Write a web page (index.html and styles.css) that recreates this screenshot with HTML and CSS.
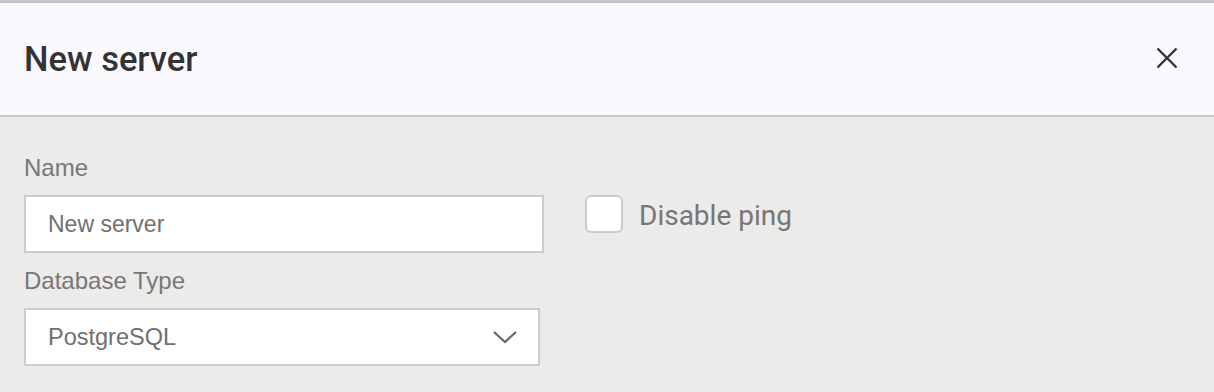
FILE: index.html
```html
<!DOCTYPE html>
<html lang="en">
<head>
<meta charset="UTF-8">
<meta name="viewport" content="width=device-width, initial-scale=1.0">
<title>New server</title>
<link rel="stylesheet" href="styles.css">
</head>
<body>

<div class="modal">
    <div class="modal-header">
        <h2 class="modal-title">New server</h2>
        <button class="close" aria-label="Close">
            <svg width="22" height="22" viewBox="0 0 22 22">
                <path d="M1.5 1.5 L20.5 20.5 M20.5 1.5 L1.5 20.5" stroke="#333" stroke-width="2.4" stroke-linecap="butt" fill="none"/>
            </svg>
        </button>
    </div>

    <div class="modal-body">
        <div class="fields">
            <label class="field-label" for="name">Name</label>
            <input class="field-input" id="name" type="text" value="New server">

            <label class="field-label second" for="dbtype">Database Type</label>
            <div class="select">
                <span>PostgreSQL</span>
                <svg width="26" height="16" viewBox="0 0 26 16">
                    <path d="M2 3 L13 13 L24 3" stroke="#666" stroke-width="2.2" fill="none"/>
                </svg>
            </div>
        </div>

        <label class="checkbox">
            <span class="box"></span>
            <span class="checkbox-text">Disable ping</span>
        </label>
    </div>
</div>

</body>
</html>
```

FILE: styles.css
```css
body, html {
    margin: 0;
    padding: 0;
    height: 100%;
    width: 100%;
}

body {
    background-color: #ecebe9;
    font-family: "Liberation Sans", Arial, sans-serif;
}

.modal {
    border-top: 3px solid #c4c4c4;
}

.modal-header {
    height: 114px;
    box-sizing: border-box;
    padding: 0 36px 0 24px;
    display: flex;
    align-items: center;
    justify-content: space-between;
    background-color: #fafafe;
    border-bottom: 2px solid #c9c9c9;
}

.modal-title {
    margin: 0;
    font-family: Roboto, sans-serif;
    font-weight: 500;
    font-size: 34.5px;
    color: #333;
}

.close {
    background: none;
    border: none;
    padding: 0 0 2px 0;
    cursor: pointer;
    display: flex;
}

.modal-body {
    display: flex;
    align-items: flex-start;
    padding: 37px 24px;
}

.fields {
    display: flex;
    flex-direction: column;
    width: 520px;
}

.field-label {
    font-size: 24px;
    line-height: 28px;
    color: #777;
    margin-bottom: 13px;
}

.field-label.second {
    margin-top: 14px;
    margin-bottom: 13px;
}

.field-input {
    width: 520px;
    height: 58px;
    box-sizing: border-box;
    border: 2px solid #cdcdcd;
    background-color: #fff;
    padding: 0 22px;
    font-family: "Liberation Sans", Arial, sans-serif;
    font-size: 23px;
    color: #707070;
    outline: none;
}

.select {
    width: 516px;
    height: 58px;
    box-sizing: border-box;
    border: 2px solid #cdcdcd;
    background-color: #fff;
    padding: 0 20px 0 22px;
    display: flex;
    align-items: center;
    justify-content: space-between;
    font-size: 23.5px;
    color: #707070;
}

.checkbox {
    display: flex;
    align-items: center;
    margin-left: 41px;
    margin-top: 41px;
}

.box {
    width: 38px;
    height: 38px;
    box-sizing: border-box;
    border: 2px solid #cbcbcb;
    border-radius: 6px;
    background-color: #fff;
}

.checkbox-text {
    margin-left: 16px;
    padding-top: 2px;
    font-family: Roboto, sans-serif;
    font-size: 28px;
    color: #767676;
}
```
